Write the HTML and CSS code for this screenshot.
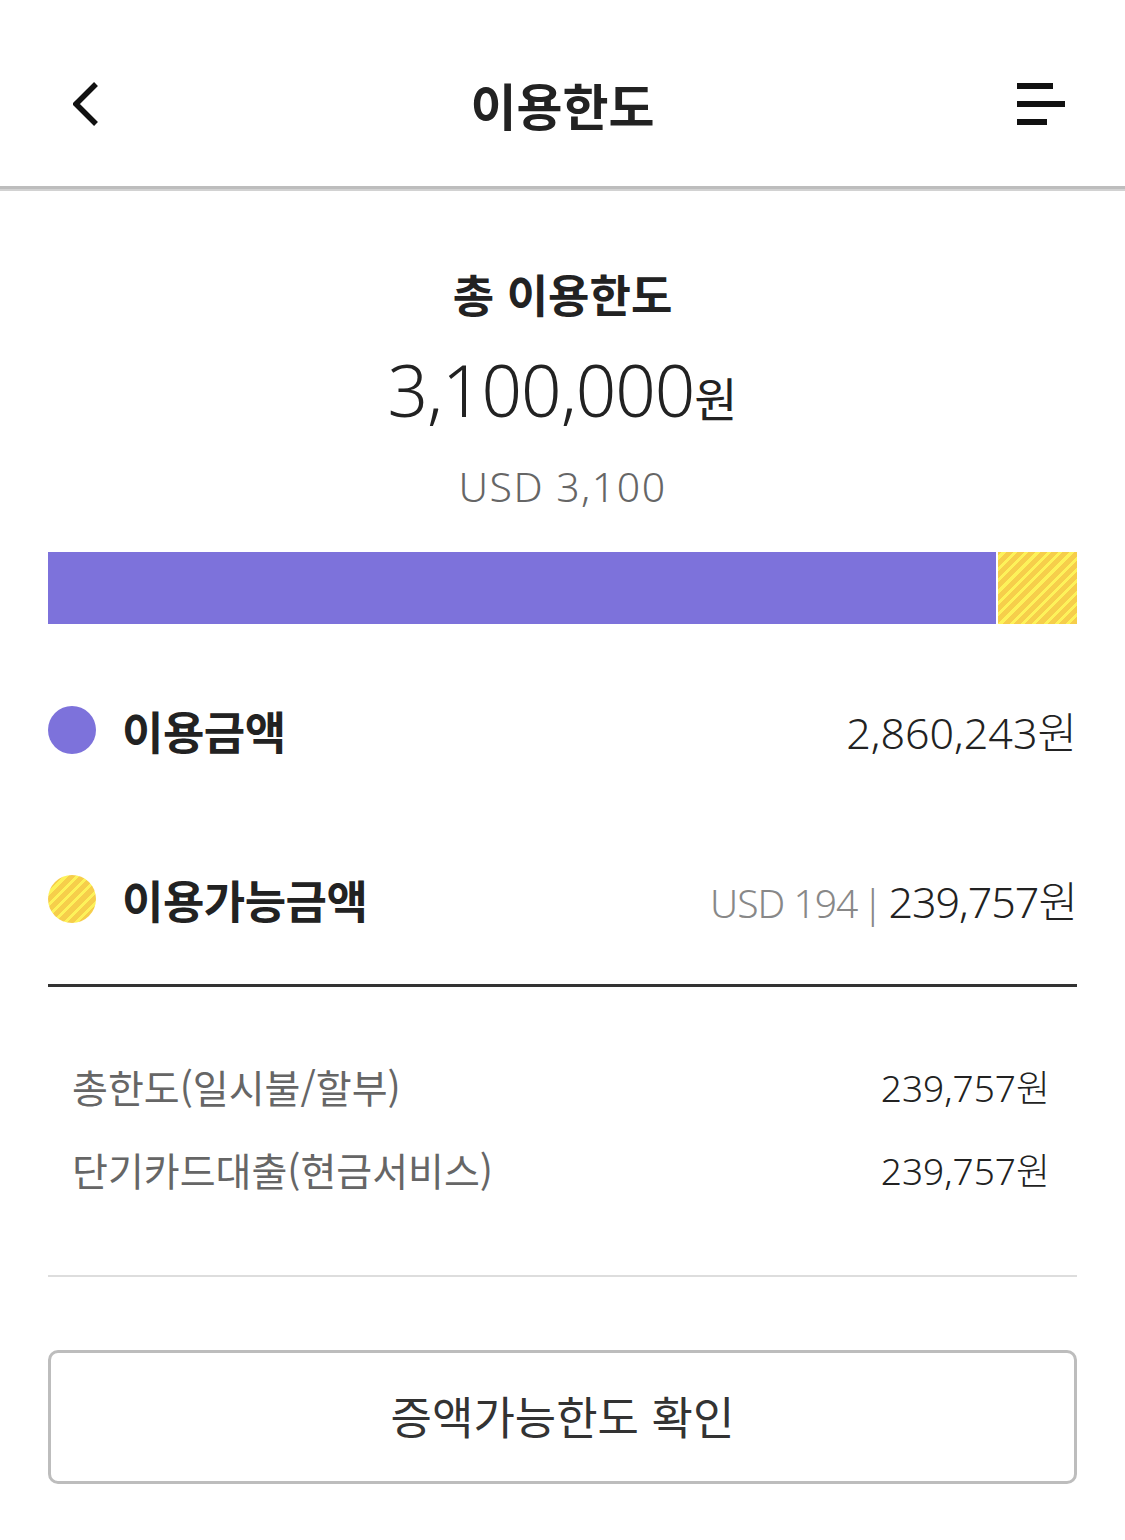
FILE: index.html
```html
<!DOCTYPE html>
<html lang="ko">
<head>
<meta charset="utf-8">
<title>이용한도</title>
<link rel="stylesheet" href="styles.css">
</head>
<body>
<div class="page">
  <header class="topbar">
    <div class="topbar-left">
      <svg class="icon-back" width="40" height="56" viewBox="0 0 40 56" aria-hidden="true">
        <polyline points="23,8 3,28 23,48" fill="none" stroke="#111" stroke-width="5.5" stroke-linecap="butt" stroke-linejoin="miter"/>
      </svg>
    </div>
    <h1 class="topbar-title">이용한도</h1>
    <div class="topbar-right">
      <svg class="icon-menu" width="48" height="42" viewBox="0 0 48 42" aria-hidden="true">
        <rect x="0" y="0" width="36" height="6" fill="#111"/>
        <rect x="0" y="18" width="48" height="6" fill="#111"/>
        <rect x="0" y="36" width="30" height="6" fill="#111"/>
      </svg>
    </div>
  </header>

  <main class="content">
    <section class="summary">
      <h2 class="summary-title">총 이용한도</h2>
      <div class="summary-amount"><span class="num">3,100,000</span><span class="unit">원</span></div>
      <div class="summary-usd">USD 3,100</div>
    </section>

    <div class="bar">
      <div class="bar-used" style="width: 92.1%"></div>
      <div class="bar-avail"></div>
    </div>

    <ul class="legend">
      <li class="legend-row">
        <div class="legend-label"><span class="dot dot-used"></span>이용금액</div>
        <div class="legend-value legend-value-used">2,860,243원</div>
      </li>
      <li class="legend-row">
        <div class="legend-label"><span class="dot dot-avail"></span>이용가능금액</div>
        <div class="legend-value"><span class="usd">USD 194</span><span class="sep">|</span>239,757원</div>
      </li>
    </ul>

    <ul class="details">
      <li class="detail-row"><span class="detail-label">총한도(일시불/할부)</span><span class="detail-value">239,757원</span></li>
      <li class="detail-row"><span class="detail-label">단기카드대출(현금서비스)</span><span class="detail-value">239,757원</span></li>
    </ul>

    <button class="btn-outline" type="button">증액가능한도 확인</button>
  </main>
</div>
</body>
</html>
```

FILE: styles.css
```css
* {
  box-sizing: border-box;
}

html, body {
  margin: 0;
  padding: 0;
  background: #ffffff;
}

body {
  font-family: "Noto Sans", "Noto Sans CJK KR", sans-serif;
  color: #222222;
}

.page {
  width: 1125px;
}

.topbar {
  height: 189px;
  display: grid;
  grid-template-columns: 1fr auto 1fr;
  align-items: center;
  padding: 21px 60px 0 60px;
  border-bottom: 3px solid #bdbdbd;
  box-shadow: 0 2px 0 #d2d2d2;
  margin-bottom: 2px;
}

.topbar-left {
  display: flex;
  align-items: center;
}

.topbar-right {
  display: flex;
  justify-content: flex-end;
  align-items: center;
}

.icon-back {
  display: block;
  margin-left: 13px;
}

.icon-menu {
  display: block;
}

.topbar-title {
  margin: 0;
  font-family: "Noto Sans CJK KR", sans-serif;
  font-size: 50px;
  font-weight: 700;
  color: #222;
  line-height: 60px;
}

.content {
  padding: 0 48px;
}

.summary {
  padding-top: 75px;
  text-align: center;
}

.summary-title {
  margin: 0;
  font-family: "Noto Sans CJK KR", sans-serif;
  font-size: 45px;
  font-weight: 700;
  line-height: 56px;
  color: #222;
}

.summary-amount {
  margin-top: 23px;
  line-height: 90px;
  height: 90px;
  color: #222;
}

.summary-amount .num {
  font-size: 71px;
  font-weight: 300;
  letter-spacing: -1px;
}

.summary-amount .unit {
  font-family: "Noto Sans CJK KR", sans-serif;
  font-size: 47px;
  font-weight: 400;
}

.summary-usd {
  margin-top: 26px;
  font-size: 41px;
  line-height: 50px;
  font-weight: 300;
  color: #666666;
  letter-spacing: 1.5px;
}

.bar {
  margin-top: 41px;
  height: 72px;
  display: flex;
  gap: 2px;
}

.bar-used {
  background: #7d72db;
  height: 100%;
}

.bar-avail {
  flex: 1;
  height: 100%;
  background: repeating-linear-gradient(
    -45deg,
    #f6ce4b 0px,
    #f6ce4b 5px,
    #fdf25a 5px,
    #fdf25a 8px
  );
}

.legend {
  list-style: none;
  margin: 22px 0 0 0;
  padding: 0;
  border-bottom: 3px solid #333333;
}

.legend-row {
  height: 168px;
  display: flex;
  align-items: center;
  justify-content: space-between;
}

.legend-row + .legend-row {
  height: 170px;
}

.legend-label {
  display: flex;
  align-items: center;
  font-family: "Noto Sans CJK KR", sans-serif;
  font-size: 45px;
  font-weight: 700;
  color: #222;
  letter-spacing: -0.5px;
}

.dot {
  width: 48px;
  height: 48px;
  border-radius: 50%;
  margin-right: 26px;
  flex-shrink: 0;
}

.dot-used {
  background: #7d72db;
}

.dot-avail {
  background: repeating-linear-gradient(
    -45deg,
    #f6ce4b 0px,
    #f6ce4b 5px,
    #fdf25a 5px,
    #fdf25a 8px
  );
}

.legend-value {
  display: flex;
  align-items: baseline;
  font-size: 43px;
  font-weight: 300;
  color: #222;
  letter-spacing: -1px;
}

.legend-value-used {
  letter-spacing: 0;
}

.legend-value .usd {
  font-size: 39px;
  color: #888888;
}

.legend-value .sep {
  font-size: 39px;
  color: #888888;
  margin: 0 6px 0 5px;
}

.details {
  list-style: none;
  margin: 0;
  padding: 57px 27px 65px 24px;
  border-bottom: 2px solid #dddddd;
}

.detail-row {
  height: 83px;
  display: flex;
  align-items: center;
  justify-content: space-between;
}

.detail-label {
  font-family: "Noto Sans CJK KR", sans-serif;
  font-size: 39px;
  font-weight: 400;
  color: #666666;
}

.detail-value {
  font-size: 37px;
  font-weight: 300;
  color: #222;
  letter-spacing: 0;
}

.btn-outline {
  display: block;
  width: 100%;
  height: 134px;
  margin-top: 73px;
  background: #ffffff;
  border: 3px solid #bdbdbd;
  border-radius: 10px;
  font-family: "Noto Sans CJK KR", sans-serif;
  font-size: 45px;
  font-weight: 400;
  color: #333333;
  padding: 0 0 4px 0;
}
```
